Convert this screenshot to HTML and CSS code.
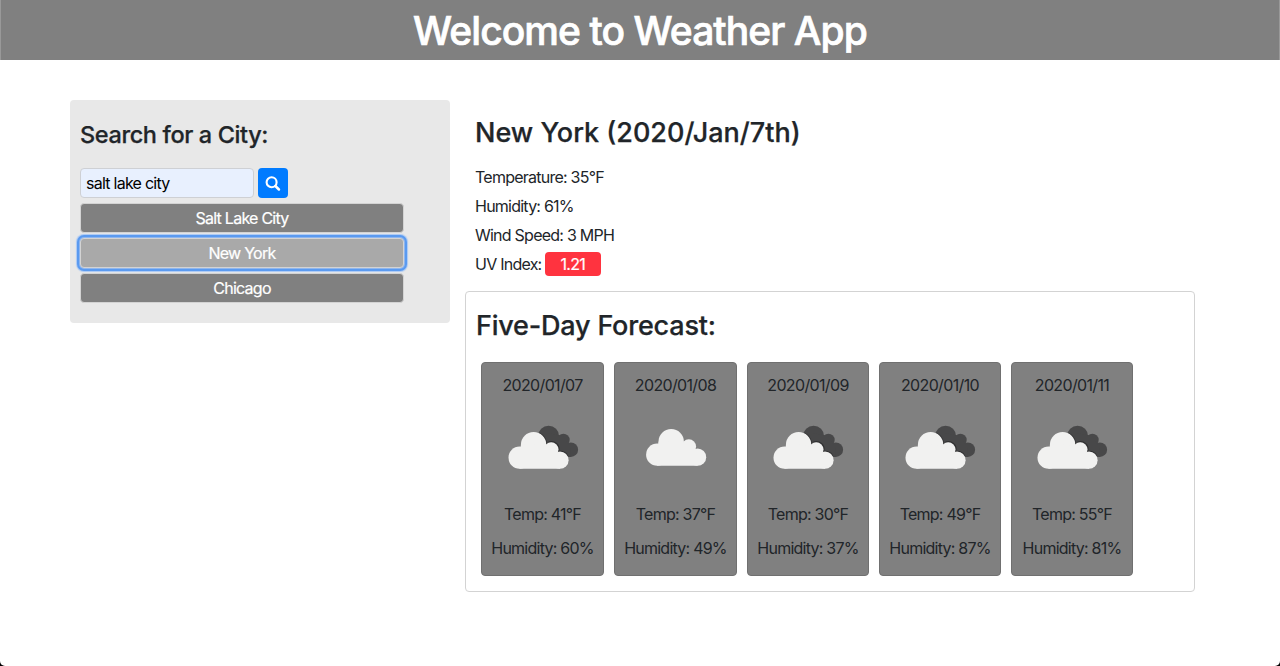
FILE: index.html
```html
<!DOCTYPE html>
<html lang="en">
<head>
<meta charset="utf-8">
<title>Weather App</title>
<link rel="stylesheet" href="styles.css">
</head>
<body>
<svg class="defs" width="0" height="0" aria-hidden="true">
  <symbol id="cloud" viewBox="0 0 100 100">
    <g fill="#f1f1f0"><circle cx="26.6" cy="59.7" r="11.1"/><circle cx="40.6" cy="46.7" r="12.7"/><circle cx="58.2" cy="51.6" r="7.3"/><circle cx="67" cy="62.2" r="8.6"/><path d="M26.5 70.8H67V57L58 50 40 46 28 46.7 26.5 56Z"/></g>
  </symbol>
  <symbol id="clouds" viewBox="0 0 100 100">
    <g fill="#484849"><circle cx="55.6" cy="38.2" r="10.5"/><circle cx="70.4" cy="42" r="6.3"/><circle cx="77.8" cy="51.7" r="7.3"/><path d="M55 35 70 38 77.8 50V59H62L45 45Z"/></g>
    <g fill="none" stroke="#303031" stroke-width="1.2"><path d="M46.5 35.4A12.9 12.9 0 0 1 53.5 46"/><path d="M55 44.6A7.5 7.5 0 0 1 65.6 53.6"/><path d="M66 53.5A8.8 8.8 0 0 1 74.8 58.2"/></g>
    <use href="#cloud" width="100" height="100"/>
  </symbol>
</svg>
<header class="banner"><h1>Welcome to Weather App</h1></header>
<main class="layout">
  <aside class="search">
    <h2>Search for a City:</h2>
    <div class="search-row">
      <input class="city-input" type="text" value="salt lake city">
      <button class="search-btn" aria-label="Search"><svg width="16" height="16" viewBox="0 0 16 16"><circle cx="6.6" cy="7.2" r="5" fill="none" stroke="#fff" stroke-width="2.1"/><path d="M10.4 11 13.9 14.5" stroke="#fff" stroke-width="2.5" stroke-linecap="round"/></svg></button>
    </div>
    <div class="history">
      <button class="city">Salt Lake City</button>
      <button class="city active">New York</button>
      <button class="city">Chicago</button>
    </div>
  </aside>
  <section class="results">
    <div class="current">
      <h2>New York (2020/Jan/7th)</h2>
      <p>Temperature: 35°F</p>
      <p>Humidity: 61%</p>
      <p>Wind Speed: 3 MPH</p>
      <p>UV Index: <span class="uv">1.21</span></p>
    </div>
    <div class="forecast">
      <h2>Five-Day Forecast:</h2>
      <div class="days">
        <article class="day"><p class="date">2020/01/07</p><svg width="100" height="100"><use href="#clouds"/></svg><p>Temp: 41°F</p><p>Humidity: 60%</p></article>
        <article class="day"><p class="date">2020/01/08</p><svg width="100" height="100"><use href="#cloud" x="4.6" y="-3" width="100" height="100"/></svg><p>Temp: 37°F</p><p>Humidity: 49%</p></article>
        <article class="day"><p class="date">2020/01/09</p><svg width="100" height="100"><use href="#clouds"/></svg><p>Temp: 30°F</p><p>Humidity: 37%</p></article>
        <article class="day"><p class="date">2020/01/10</p><svg width="100" height="100"><use href="#clouds"/></svg><p>Temp: 49°F</p><p>Humidity: 87%</p></article>
        <article class="day"><p class="date">2020/01/11</p><svg width="100" height="100"><use href="#clouds"/></svg><p>Temp: 55°F</p><p>Humidity: 81%</p></article>
      </div>
    </div>
  </section>
</main>
</body>
</html>
```

FILE: styles.css
```css
* { box-sizing: border-box; }
html { background: #000; height: 100%; }
body {
  margin: 0;
  height: 100%;
  overflow: hidden;
  background: #fff;
  border-radius: 0 0 5px 5px;
  color: #212529;
  font: 400 16px/24px Inter, "Liberation Sans", sans-serif;
  letter-spacing: -0.76px;
}
h1, h2, p { margin: 0; font-weight: 500; }
p { font-weight: 400; }
.defs { position: absolute; }
.banner {
  height: 60px;
  padding-top: 7px;
  background: #808080;
  border: solid #999;
  border-width: 0 1px;
  color: #fff;
  text-align: center;
}
.banner h1 { font-size: 39px; line-height: 48px; letter-spacing: -0.93px; -webkit-text-stroke: 0.7px #fff; }
.layout { display: flex; align-items: flex-start; gap: 15px; padding: 40px 85px 0 70px; }
.search { width: 380px; height: 223px; padding: 20px 10px; background: #e8e8e8; border-radius: 4px; }
.search h2 { font-size: 23.5px; line-height: 29px; letter-spacing: -0.38px; }
.search h2, .current h2, .forecast h2 { -webkit-text-stroke: 0.25px #212529; }
.search-row { display: flex; gap: 4px; margin-top: 19px; }
.city-input {
  width: 174px;
  height: 30px;
  padding: 0 5px;
  border: 1px solid #ced0d4;
  border-radius: 4px;
  background: #e8f0fe;
  color: #000;
  font: inherit;
  letter-spacing: -0.75px;
}
.search-btn {
  display: flex;
  align-items: center;
  justify-content: center;
  width: 30px;
  height: 30px;
  padding: 0;
  border: 0;
  border-radius: 4px;
  background: #007bff;
}
.history { display: flex; flex-direction: column; gap: 5px; width: 324px; margin-top: 5px; }
.city {
  height: 30px;
  padding: 0;
  border: 1px solid #d3d3d3;
  border-radius: 4px;
  background: #808080;
  color: #fff;
  font: inherit;
  letter-spacing: -0.75px;
  -webkit-text-stroke: 0.2px #fff;
}
.city.active { background: #a9a9a9; box-shadow: 0 0 0 1px #8fb6ee, 0 0 0 3px #5a9af0, 0 0 1px 4px #a9c8f4; }
.results { flex: 1; }
.current { height: 191px; padding: 16px 10px 0; }
.current h2 { font-size: 27px; line-height: 34px; margin-bottom: 15px; }
.current h2 { letter-spacing: 0; }
.current p { margin-bottom: 5px; }
.uv {
  display: inline-block;
  width: 56px;
  height: 24px;
  padding-right: 1px;
  border-radius: 4px;
  background: #ff333f;
  color: #fff;
  text-align: center;
  -webkit-text-stroke: 0.2px #fff;
}
.forecast { height: 301px; padding: 17px 10px 0; border: 1px solid #d3d3d3; border-radius: 4px; }
.forecast h2 { font-size: 27px; line-height: 34px; letter-spacing: -0.2px; }
.days { display: grid; grid-template-columns: 123px 123px 122px 122px 122px; gap: 10px; padding: 19px 5px 0; }
.day {
  display: flex;
  flex-direction: column;
  align-items: center;
  height: 214px;
  padding-top: 10px;
  border: 1px solid #707070;
  border-radius: 4px;
  background: #808080;
  white-space: nowrap;
}
.day svg { flex: none; margin: 1px 0 4px; }
.day p + p { margin-top: 10px; }
.day .date { letter-spacing: -0.65px; }
```
